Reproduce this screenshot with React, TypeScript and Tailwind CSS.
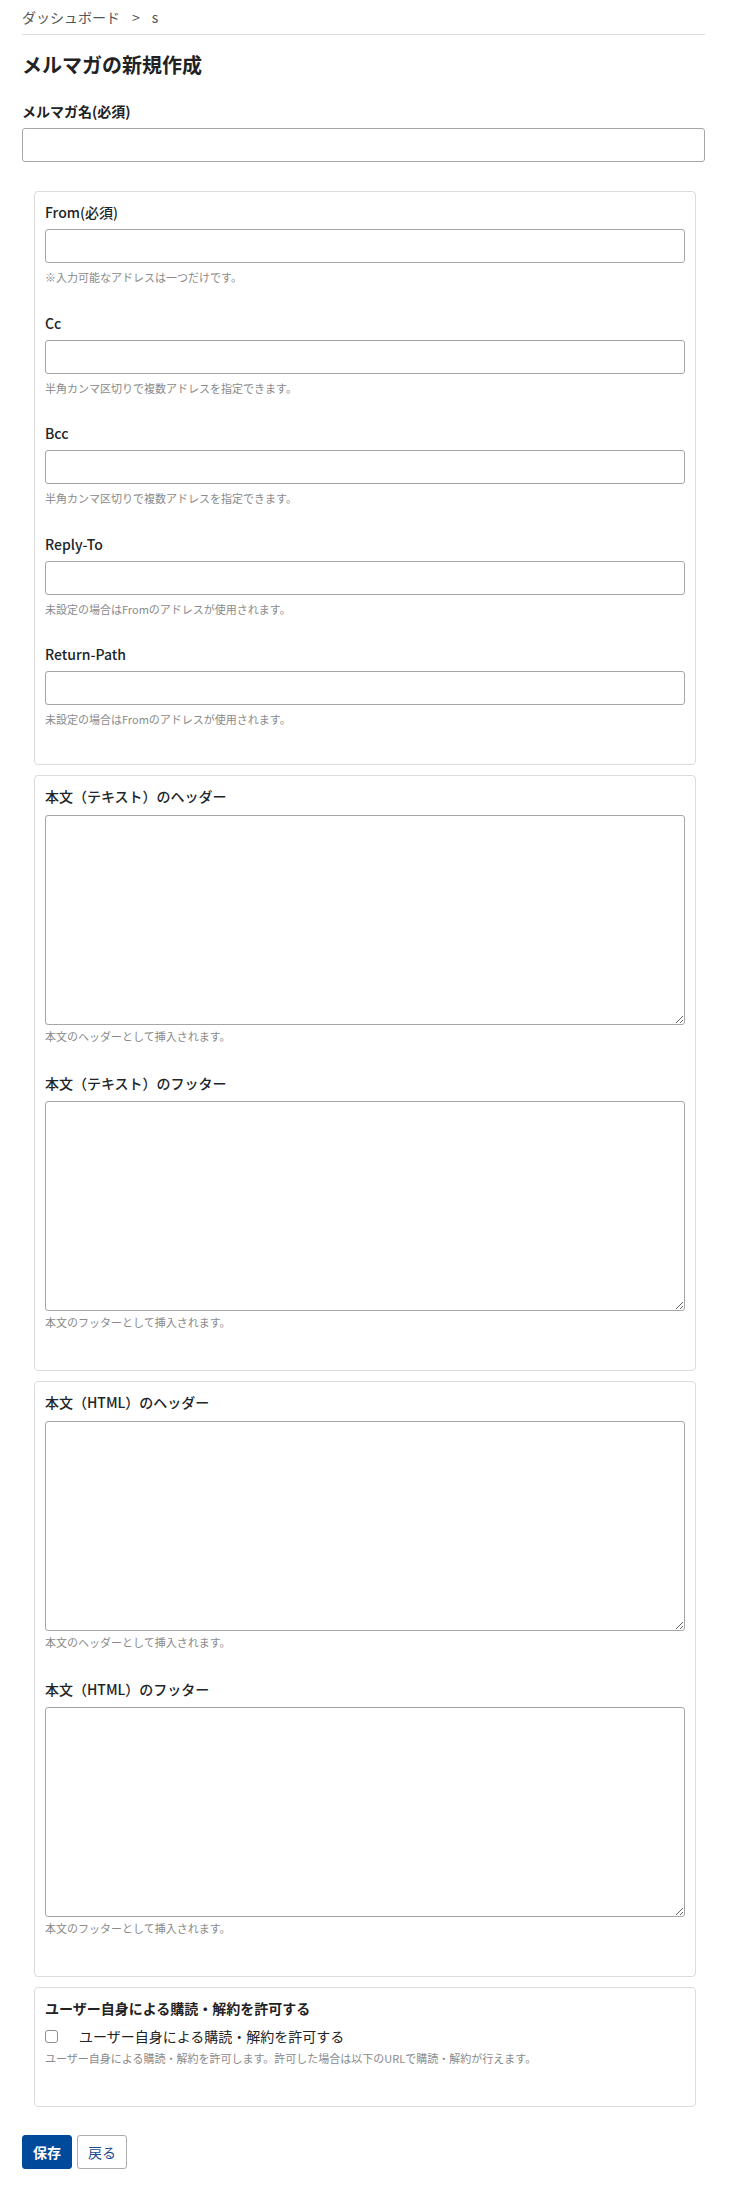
import React from "react";

function Label({ children, className = "" }: { children: React.ReactNode; className?: string }) {
  return <div className={"text-[14px] leading-[20px] font-medium text-[#212529] " + className}>{children}</div>;
}

function Hint({ children, className = "" }: { children: React.ReactNode; className?: string }) {
  return <div className={"text-[11px] leading-[16px] text-[#8a8a8a] " + className}>{children}</div>;
}

function TextInput() {
  return (
    <input
      type="text"
      className="mt-[7px] block w-full h-[34px] border border-[#a6a6a6] rounded-[3px] bg-white px-2 text-[14px] outline-none"
    />
  );
}

function InputField({ label, hint, mb }: { label: React.ReactNode; hint: string; mb: string }) {
  return (
    <div className={mb}>
      <Label>{label}</Label>
      <TextInput />
      <Hint className="mt-[6px]">{hint}</Hint>
    </div>
  );
}

function TextAreaField({ label, hint, first }: { label: string; hint: string; first?: boolean }) {
  return (
    <div className={first ? "" : "mt-[29px]"}>
      <Label>{label}</Label>
      <textarea
        className={
          (first ? "mt-[9px] " : "mt-[8px] ") +
          "block w-full h-[210px] border border-[#a6a6a6] rounded-[3px] bg-white px-2 py-1 text-[14px] outline-none"
        }
      />
      <Hint className="mt-[3px]">{hint}</Hint>
    </div>
  );
}

function Card({ children, className = "" }: { children: React.ReactNode; className?: string }) {
  return (
    <div className={"ml-[12px] mr-[9px] border border-[#dcdcdc] rounded-[4px] bg-white px-[10px] pt-[10px] " + className}>
      {children}
    </div>
  );
}

export default function App() {
  return (
    <div className="min-h-[2201px] bg-white pl-[22px] pr-[29px] pb-[32px] font-['Noto_Sans_CJK_JP','Noto_Sans',sans-serif] text-[#212529]">
      <nav className="h-[35px] flex items-center border-b border-[#dedede] text-[14px] leading-[20px] text-[#555555]">
        <span>ダッシュボード</span>
        <span className="px-[12px]">&gt;</span>
        <span>s</span>
      </nav>

      <h1 className="mt-[16px] text-[20px] leading-[28px] font-bold text-[#222222]">メルマガの新規作成</h1>

      <div className="mt-[22px] text-[14px] leading-[20px] font-bold text-[#222222]">メルマガ名(必須)</div>
      <input
        type="text"
        className="mt-[7px] block w-full h-[34px] border border-[#a6a6a6] rounded-[3px] bg-white px-2 text-[14px] outline-none"
      />

      <div className="mt-[29px] flex flex-col gap-[10px]">
        <Card className="pb-[37px]">
          <InputField label="From(必須)" hint="※入力可能なアドレスは一つだけです。" mb="mb-[28px]" />
          <InputField label="Cc" hint="半角カンマ区切りで複数アドレスを指定できます。" mb="mb-[27px]" />
          <InputField label="Bcc" hint="半角カンマ区切りで複数アドレスを指定できます。" mb="mb-[28px]" />
          <InputField label="Reply-To" hint="未設定の場合はFromのアドレスが使用されます。" mb="mb-[27px]" />
          <InputField label="Return-Path" hint="未設定の場合はFromのアドレスが使用されます。" mb="" />
        </Card>

        <Card className="pb-[40px]">
          <TextAreaField first label="本文（テキスト）のヘッダー" hint="本文のヘッダーとして挿入されます。" />
          <TextAreaField label="本文（テキスト）のフッター" hint="本文のフッターとして挿入されます。" />
        </Card>

        <Card className="pb-[40px]">
          <TextAreaField first label="本文（HTML）のヘッダー" hint="本文のヘッダーとして挿入されます。" />
          <TextAreaField label="本文（HTML）のフッター" hint="本文のフッターとして挿入されます。" />
        </Card>

        <Card className="pb-[40px]">
          <div className="text-[14px] leading-[20px] font-bold text-[#222222]">ユーザー自身による購読・解約を許可する</div>
          <label className="mt-[8px] flex items-center h-[20px]">
            <input
              type="checkbox"
              className="appearance-none m-0 w-[13px] h-[13px] border border-[#8f8f8f] rounded-[3px] bg-white"
            />
            <span className="ml-[21px] text-[14px] leading-[20px] text-[#222222]">ユーザー自身による購読・解約を許可する</span>
          </label>
          <Hint className="mt-[4px]">
            ユーザー自身による購読・解約を許可します。許可した場合は以下のURLで購読・解約が行えます。
          </Hint>
        </Card>
      </div>

      <div className="mt-[28px] flex items-center">
        <button className="h-[34px] px-[10px] rounded-[3px] border border-[#004a9b] bg-[#004a9b] text-[14px] leading-[20px] font-bold text-white">
          保存
        </button>
        <button className="ml-[5px] h-[34px] px-[10px] rounded-[3px] border border-[#adadad] bg-white text-[14px] leading-[20px] text-[#1a4c94]">
          戻る
        </button>
      </div>
    </div>
  );
}
